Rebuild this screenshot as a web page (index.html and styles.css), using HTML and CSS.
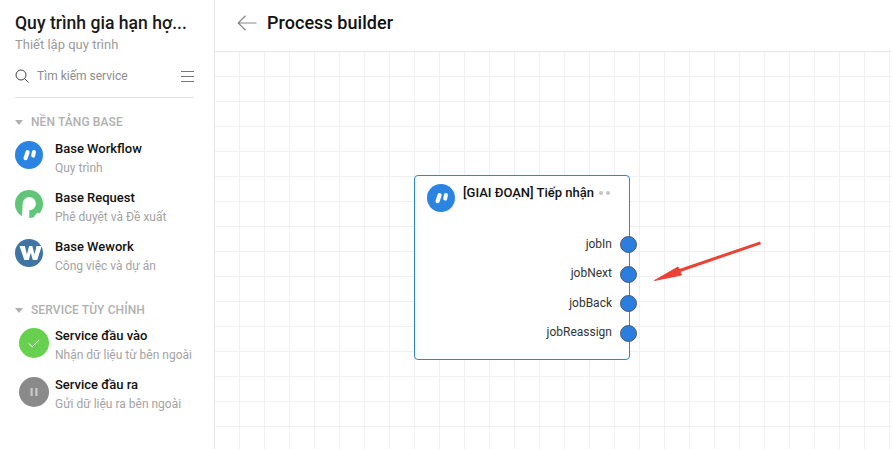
FILE: index.html
```html
<!DOCTYPE html>
<html lang="vi">
<head>
<meta charset="utf-8">
<title>Process builder</title>
<link rel="stylesheet" href="styles.css">
</head>
<body>
<div class="app">
  <aside class="sidebar">
    <h1 class="title">Quy trình gia hạn hợ...</h1>
    <p class="subtitle">Thiết lập quy trình</p>
    <div class="search">
      <svg class="search-icon" width="14" height="14" viewBox="0 0 14 14" fill="none" stroke="#444" stroke-width="1"><circle cx="6" cy="6" r="5"/><path d="M9.7 9.7 13.5 13.5"/></svg>
      <span class="search-text">Tìm kiếm service</span>
      <svg class="menu-icon" width="13" height="11" viewBox="0 0 13 11" fill="none" stroke="#777" stroke-width="1"><path d="M0 .5H13M0 5.5H13M0 10.5H13"/></svg>
    </div>
    <div class="group-head group-first"><span class="caret"></span>NỀN TẢNG BASE</div>
    <div class="item">
      <svg class="logo" width="28" height="28" viewBox="0 0 28 28"><circle cx="14" cy="14" r="14" fill="#2b83e2"/><path d="M12.6 11.2 10.6 17.2" stroke="#fff" stroke-width="4.2" stroke-linecap="round"/><path d="M18.9 11 18.2 14.6" stroke="#fff" stroke-width="4" stroke-linecap="round"/></svg>
      <div class="item-text"><div class="item-name">Base Workflow</div><div class="item-desc">Quy trình</div></div>
    </div>
    <div class="item">
      <svg class="logo" width="28" height="28" viewBox="0 0 28 28"><circle cx="14" cy="14" r="14" fill="#5fc577"/><circle cx="14.3" cy="13.7" r="6.6" fill="#fff"/><path d="M7.7 13.7H14.3V28H6.8Z" fill="#fff"/><path d="M19.5 28V25.5L23 22.5 28 28Z" fill="#fff"/></svg>
      <div class="item-text"><div class="item-name">Base Request</div><div class="item-desc">Phê duyệt và Đề xuất</div></div>
    </div>
    <div class="item">
      <svg class="logo" width="28" height="28" viewBox="0 0 28 28"><circle cx="14" cy="14" r="14" fill="#3f74a3"/><path d="M4.5 7h5.4l2 8.6 2.2-8.6h3.2l2.3 8.6 1.9-8.6h5.2l-4.5 14h-4.4l-2-7.2-2 7.2h-4.5z" fill="#fff"/></svg>
      <div class="item-text"><div class="item-name">Base Wework</div><div class="item-desc">Công việc và dự án</div></div>
    </div>
    <div class="group-head group-second"><span class="caret"></span>SERVICE TÙY CHỈNH</div>
    <div class="item item-service">
      <svg class="logo-round" width="30" height="30" viewBox="0 0 30 30"><circle cx="15" cy="15" r="15" fill="#67d04e"/><path d="M9.5 15.3 13.2 18.8 20.3 12" fill="none" stroke="#fff" stroke-width="1"/></svg>
      <div class="item-text"><div class="item-name">Service đầu vào</div><div class="item-desc">Nhận dữ liệu từ bên ngoài</div></div>
    </div>
    <div class="item item-service">
      <svg class="logo-round" width="30" height="30" viewBox="0 0 30 30"><circle cx="15" cy="15" r="15" fill="#8a8a8a"/><path d="M11.5 11h2.2v8h-2.2zM16.3 11h2.2v8h-2.2z" fill="#c9c9c9"/></svg>
      <div class="item-text"><div class="item-name">Service đầu ra</div><div class="item-desc">Gửi dữ liệu ra bên ngoài</div></div>
    </div>
  </aside>
  <main class="main">
    <header class="topbar">
      <svg class="back" width="20" height="16" viewBox="0 0 20 16" fill="none" stroke="#888" stroke-width="1.2"><path d="M8.5 .8 1.2 8l7.3 7.2M1.2 8H19.5"/></svg>
      <span class="page-title">Process builder</span>
    </header>
    <section class="canvas">
      <div class="node">
        <div class="node-head">
          <svg class="logo" width="28" height="28" viewBox="0 0 28 28"><circle cx="14" cy="14" r="14" fill="#2b83e2"/><path d="M12.6 11.2 10.6 17.2" stroke="#fff" stroke-width="4.2" stroke-linecap="round"/><path d="M18.9 11 18.2 14.6" stroke="#fff" stroke-width="4" stroke-linecap="round"/></svg>
          <span class="node-title">[GIAI ĐOẠN] Tiếp nhận</span>
          <span class="dots"><i></i><i></i></span>
        </div>
        <div class="ports">
          <div class="port"><span class="port-label">jobIn</span><span class="pin"></span></div>
          <div class="port"><span class="port-label">jobNext</span><span class="pin"></span></div>
          <div class="port"><span class="port-label">jobBack</span><span class="pin"></span></div>
          <div class="port"><span class="port-label">jobReassign</span><span class="pin"></span></div>
        </div>
      </div>
      <svg class="arrow" width="112" height="44" viewBox="0 0 112 44"><path d="M108.5 3.8 22 33.5" stroke="#ea4335" stroke-width="3" fill="none"/><path d="M2.5 41.5 26 28 29.5 36Z" fill="#ea4335" stroke="#ea4335" stroke-width="1"/></svg>
    </section>
  </main>
</div>
</body>
</html>
```
FILE: styles.css
```css
* { box-sizing: border-box; }
html, body { margin: 0; height: 100%; overflow: hidden; }
body { font-family: Roboto, "Noto Sans", sans-serif; background: #fff; color: #111; }
.app { display: flex; height: 449px; }
.sidebar { width: 215px; flex: none; border-right: 1px solid #e6e6e6; padding: 12px 20px 0 15px; background: #fff; }
.title { margin: 0; font-size: 17.6px; line-height: 22px; font-weight: 500; color: #1a1a1a; white-space: nowrap; }
.subtitle { margin: 0; font-size: 13px; line-height: 22px; color: #9b9b9b; }
.search { display: flex; align-items: center; height: 42px; border-bottom: 1px solid #e4e4e4; padding-top: 1px; padding-bottom: 2px; }
.search-icon { flex: none; }
.search-text { margin-left: 8px; font-size: 12px; color: #8d8d8d; flex: 1; }
.menu-icon { flex: none; }
.group-head { display: flex; align-items: center; font-size: 12px; line-height: 14px; color: #b0b0b0; font-weight: 500; letter-spacing: .1px; }
.group-first { margin-top: 17px; margin-bottom: 12px; }
.group-second { margin-top: 15px; margin-bottom: 11px; }
.caret { width: 0; height: 0; border-left: 4px solid transparent; border-right: 4px solid transparent; border-top: 5px solid #b0b0b0; margin-right: 8px; }
.item { display: flex; align-items: flex-start; height: 49px; }
.item-text { margin-left: 12px; margin-top: -1px; }
.item-name { font-size: 13px; line-height: 18px; font-weight: 500; color: #111; }
.item-desc { font-size: 12px; line-height: 18px; margin-top: 1px; color: #a3a3a3; }
.logo { flex: none; display: block; }
.logo-round { flex: none; display: block; margin-left: 4px; }
.item-service .item-text { margin-left: 6px; }
.main { flex: 1; display: flex; flex-direction: column; min-width: 0; }
.topbar { display: flex; align-items: center; height: 52px; flex: none; border-bottom: 1px solid #e6e6e6; padding-left: 22px; padding-bottom: 6px; }
.back { flex: none; }
.page-title { margin-left: 10px; font-size: 18px; font-weight: 500; color: #111; letter-spacing: .05px; }
.canvas { flex: 1; position: relative; background-color: #fff;
  background-image: linear-gradient(to right, #f0f0f0 1px, transparent 1px), linear-gradient(to bottom, #f0f0f0 1px, transparent 1px);
  background-size: 25px 25px; background-position: -1px 24px; }
.node { position: absolute; left: 199px; top: 123px; width: 216px; height: 185px; background: #fff; border: 1px solid #2b83e2; border-radius: 4px; padding: 8px 0 0 12px; }
.node-head { display: flex; align-items: flex-start; }
.node-title { margin-left: 8px; font-size: 13px; line-height: 18px; font-weight: 500; color: #111; white-space: nowrap; }
.dots { display: flex; gap: 3px; margin-left: 5px; margin-top: 7px; }
.dots i { display: block; width: 4px; height: 4px; border-radius: 50%; background: #c4c4c4; }
.ports { margin-top: 17.9px; margin-right: -8px; }
.port { display: flex; justify-content: flex-end; align-items: center; height: 29.6px; font-size: 12px; color: #333; }
.port-label { margin-bottom: 2px; }
.pin { width: 17px; height: 17px; margin-left: 8px; border-radius: 50%; background: #2b7de0; border: 1px solid #4a5a6a; }
.arrow { position: absolute; left: 437px; top: 187px; overflow: visible; }
```
